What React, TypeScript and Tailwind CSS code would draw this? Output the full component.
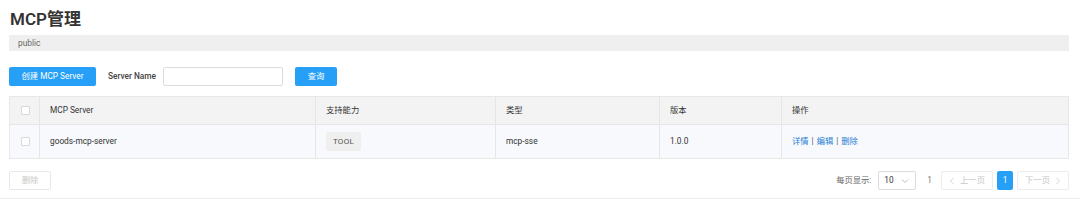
import React from "react";

const font = { fontFamily: 'Roboto, "Noto Sans CJK SC", sans-serif' };

function Checkbox() {
  return <span className="inline-block w-[9px] h-[9px] border border-[#d9d9d9] bg-white rounded-[1px]" />;
}

function Chevron({ dir }: { dir: "left" | "right" | "down" }) {
  if (dir === "down") {
    return (
      <svg width={8} height={6} viewBox="0 0 8 6" fill="none" stroke="currentColor" strokeWidth="0.8">
        <path d="M1 1.5 L4 4.5 L7 1.5" />
      </svg>
    );
  }
  const d = dir === "left" ? "M4.5 1 L1.5 4 L4.5 7" : "M1.5 1 L4.5 4 L1.5 7";
  return (
    <svg width={6} height={8} viewBox="0 0 6 8" fill="none" stroke="currentColor" strokeWidth="0.8">
      <path d={d} />
    </svg>
  );
}

export default function App() {
  const cols = ["w-[30px]", "w-[276px]", "w-[180px]", "w-[164px]", "w-[122px]", "flex-1"];
  return (
    <div className="w-[1080px] h-[201px] bg-white text-[#333] text-[8.3px] overflow-hidden" style={font}>
      <div className="pl-[9px] pr-[11px] pt-[8px] h-[199px] border-b border-[#ececec]">
        <h1 className="text-[17px] font-semibold leading-[22px] h-[22px] text-[#333] pl-[1px]">MCP管理</h1>
        <div className="mt-[5px] h-[16px] bg-[#efefef] flex items-center pl-[9px] text-[8.4px] text-[#666]">public</div>
        <div className="mt-[16px] h-[19px] flex items-center">
          <button className="w-[87px] h-[19px] bg-[#26a0f6] text-white rounded-[2px] text-[8.3px]">创建 MCP Server</button>
          <span className="ml-[12px] font-medium text-[#444]">Server Name</span>
          <input className="ml-[7px] w-[120px] h-[19px] border border-[#dcdcdc] rounded-[2px] bg-white outline-none" />
          <button className="ml-[12px] w-[42px] h-[19px] bg-[#26a0f6] text-white rounded-[2px] text-[8.3px]">查询</button>
        </div>
        <div className="mt-[10px] border border-[#e8e8e8]">
          <div className="flex h-[28px] bg-[#f3f3f3] border-b border-[#e6e6e6]">
            {["", "MCP Server", "支持能力", "类型", "版本", "操作"].map((t, i) => (
              <div
                key={i}
                className={`${cols[i]} flex items-center ${i === 0 ? "justify-center pl-[1px]" : "pl-[10px]"} ${i < 5 ? "border-r border-[#e6e6e6]" : ""}`}
              >
                {i === 0 ? <Checkbox /> : t}
              </div>
            ))}
          </div>
          <div className="flex h-[33px] bg-[#f7f9fc]">
            <div className={`${cols[0]} flex items-center justify-center pl-[1px] border-r border-[#e6e6e6]`}>
              <Checkbox />
            </div>
            <div className={`${cols[1]} flex items-center pl-[10px] border-r border-[#e6e6e6]`}>goods-mcp-server</div>
            <div className={`${cols[2]} flex items-center pl-[10px] border-r border-[#e6e6e6]`}>
              <span className="inline-flex items-center justify-center w-[35px] h-[19px] bg-[#efefef] rounded-[2px] text-[#555] text-[8px] tracking-[0.3px]">
                TOOL
              </span>
            </div>
            <div className={`${cols[3]} flex items-center pl-[10px] border-r border-[#e6e6e6]`}>mcp-sse</div>
            <div className={`${cols[4]} flex items-center pl-[10px] border-r border-[#e6e6e6]`}>1.0.0</div>
            <div className={`${cols[5]} flex items-center pl-[10px] gap-[3px]`}>
              <span className="text-[#2a7fd4]">详情</span>
              <span className="text-[#555]">|</span>
              <span className="text-[#2a7fd4]">编辑</span>
              <span className="text-[#555]">|</span>
              <span className="text-[#2a7fd4]">删除</span>
            </div>
          </div>
        </div>
        <div className="mt-[12px] h-[19px] flex items-center">
          <button className="w-[42px] h-[19px] border border-[#e8e8e8] rounded-[2px] text-[#c8c8c8] bg-white">删除</button>
          <div className="ml-auto flex items-center h-[19px]">
            <span className="text-[#666] mr-[7px]">每页显示:</span>
            <div className="w-[38px] h-[19px] border border-[#dcdcdc] rounded-[2px] flex items-center justify-between pl-[5px] pr-[6px]">
              <span className="text-[#333]">10</span>
              <span className="text-[#aaa]">
                <Chevron dir="down" />
              </span>
            </div>
            <span className="ml-[11px] text-[#777]">1</span>
            <div className="ml-[9px] w-[52px] h-[19px] border border-[#ececec] rounded-[2px] flex items-center justify-center gap-[5px] text-[#c8c8c8]">
              <Chevron dir="left" />
              <span>上一页</span>
            </div>
            <div className="ml-[4px] w-[16px] h-[19px] bg-[#26a0f6] text-white rounded-[2px] flex items-center justify-center">1</div>
            <div className="ml-[4px] w-[52px] h-[19px] border border-[#ececec] rounded-[2px] flex items-center justify-center gap-[5px] text-[#c8c8c8]">
              <span>下一页</span>
              <Chevron dir="right" />
            </div>
          </div>
        </div>
      </div>
    </div>
  );
}
